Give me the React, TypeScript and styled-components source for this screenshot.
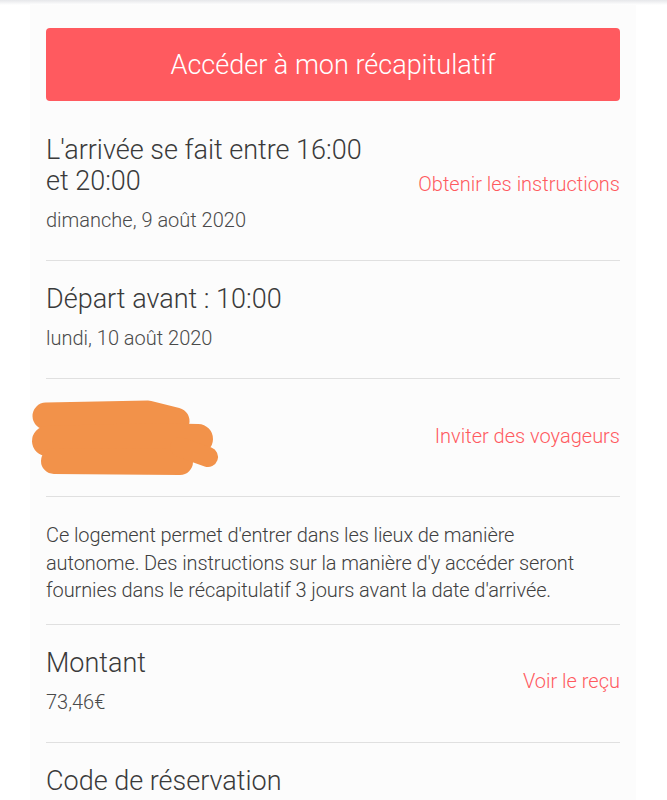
import styled, { createGlobalStyle } from "styled-components";

const GlobalStyle = createGlobalStyle`
  body {
    margin: 0;
    background: #ffffff;
    font-family: Roboto, "Noto Sans", sans-serif;
    color: #484848;
  }
`;

const TopShadow = styled.div`
  height: 5px;
  background: linear-gradient(#e6e7ea, #ffffff);
`;

const Sheet = styled.main`
  margin: 0 31px 0 30px;
  padding: 23px 16px 0;
  background: #fcfcfc;
  min-height: 795px;
  box-sizing: border-box;
`;

const PrimaryButton = styled.button`
  display: block;
  width: 100%;
  height: 73px;
  border: none;
  border-radius: 4px;
  background: #ff5a5f;
  color: #ffffff;
  font-family: Roboto, sans-serif;
  font-size: 27px;
  font-weight: 300;
  margin-bottom: 11px;
`;

const Row = styled.section<{ $last?: boolean }>`
  display: flex;
  align-items: center;
  padding: 23px 0 27px;
  border-bottom: ${(p) => (p.$last ? "none" : "1px solid #e0e0e0")};
`;

const Info = styled.div`
  flex: 1;
  min-width: 0;
  padding-right: 48px;
`;

const Title = styled.h2`
  margin: 0;
  font-size: 27px;
  font-weight: 300;
  line-height: 31px;
  color: #3a3a3a;
`;

const Sub = styled.div`
  margin-top: 10px;
  font-size: 20px;
  font-weight: 300;
  line-height: 26px;
  color: #4a4a4a;
`;

const ActionLink = styled.a`
  flex-shrink: 0;
  font-size: 20px;
  font-weight: 300;
  line-height: 26px;
  color: #ff5a5f;
  text-decoration: none;
`;

const Note = styled.p`
  margin: 2px 0 -8px;
  padding-right: 20px;
  font-size: 20px;
  font-weight: 300;
  letter-spacing: -0.1px;
  line-height: 27.5px;
  color: #404040;
`;

const Redacted = styled.div`
  display: flex;
  align-items: center;
  height: 67px;
  margin-left: -16px;
  svg {
    flex-shrink: 0;
  }
`;

function Scribble() {
  return (
    <svg width="192" height="82" viewBox="0 0 192 82">
      <g
        fill="none"
        stroke="#f2924a"
        strokeLinecap="round"
        strokeLinejoin="round"
      >
        <path d="M16 21 L118 19 L146 26" strokeWidth="27" />
        <path d="M17 46 L120 43 L168 44" strokeWidth="30" />
        <path d="M24 66 L150 67" strokeWidth="26" />
        <path d="M150 52 L178 62" strokeWidth="20" />
      </g>
    </svg>
  );
}

export default function App() {
  return (
    <>
      <GlobalStyle />
      <TopShadow />
      <Sheet>
        <PrimaryButton>Accéder à mon récapitulatif</PrimaryButton>

        <Row>
          <Info>
            <Title>L'arrivée se fait entre 16:00 et 20:00</Title>
            <Sub>dimanche, 9 août 2020</Sub>
          </Info>
          <ActionLink href="#">Obtenir les instructions</ActionLink>
        </Row>

        <Row>
          <Info>
            <Title>Départ avant : 10:00</Title>
            <Sub>lundi, 10 août 2020</Sub>
          </Info>
        </Row>

        <Row>
          <Info>
            <Redacted>
              <Scribble />
            </Redacted>
          </Info>
          <ActionLink href="#">Inviter des voyageurs</ActionLink>
        </Row>

        <Row>
          <Note>
            Ce logement permet d'entrer dans les lieux de manière autonome. Des
            instructions sur la manière d'y accéder seront fournies dans le
            récapitulatif 3 jours avant la date d'arrivée.
          </Note>
        </Row>

        <Row>
          <Info>
            <Title>Montant</Title>
            <Sub>73,46€</Sub>
          </Info>
          <ActionLink href="#">Voir le reçu</ActionLink>
        </Row>

        <Row $last>
          <Info>
            <Title>Code de réservation</Title>
          </Info>
        </Row>
      </Sheet>
    </>
  );
}
